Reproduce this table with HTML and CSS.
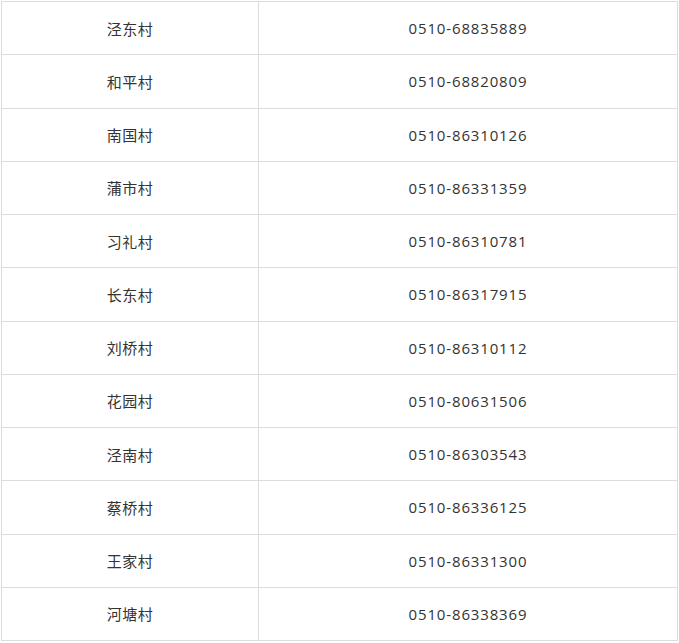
FILE: index.html
```html
<!DOCTYPE html>
<html lang="zh-CN">
<head>
<meta charset="utf-8">
<title>村委电话</title>
<link rel="stylesheet" href="styles.css">
</head>
<body>
<div class="wrap">
<table class="phones">
<tbody>
<tr><td class="name">泾东村</td><td class="tel">0510-68835889</td></tr>
<tr><td class="name">和平村</td><td class="tel">0510-68820809</td></tr>
<tr><td class="name">南国村</td><td class="tel">0510-86310126</td></tr>
<tr><td class="name">蒲市村</td><td class="tel">0510-86331359</td></tr>
<tr><td class="name">习礼村</td><td class="tel">0510-86310781</td></tr>
<tr><td class="name">长东村</td><td class="tel">0510-86317915</td></tr>
<tr><td class="name">刘桥村</td><td class="tel">0510-86310112</td></tr>
<tr><td class="name">花园村</td><td class="tel">0510-80631506</td></tr>
<tr><td class="name">泾南村</td><td class="tel">0510-86303543</td></tr>
<tr><td class="name">蔡桥村</td><td class="tel">0510-86336125</td></tr>
<tr><td class="name">王家村</td><td class="tel">0510-86331300</td></tr>
<tr><td class="name">河塘村</td><td class="tel">0510-86338369</td></tr>
</tbody>
</table>
</div>
</body>
</html>
```
FILE: styles.css
```css
html, body {
  margin: 0;
  padding: 0;
  background: #fff;
}
.wrap {
  padding: 1px;
}
.phones {
  border-collapse: collapse;
  width: 677px;
  table-layout: fixed;
  font-family: "Open Sans", "Noto Sans CJK SC", sans-serif;
  font-size: 15px;
  color: #333;
}
.phones td {
  border: 1px solid #dcdcdc;
  height: 52.25px;
  padding: 0;
  text-align: center;
  vertical-align: middle;
  letter-spacing: 0.5px;
}
.phones td.name {
  width: 256px;
}
.phones td.tel {
  letter-spacing: 0.85px;
}
```
